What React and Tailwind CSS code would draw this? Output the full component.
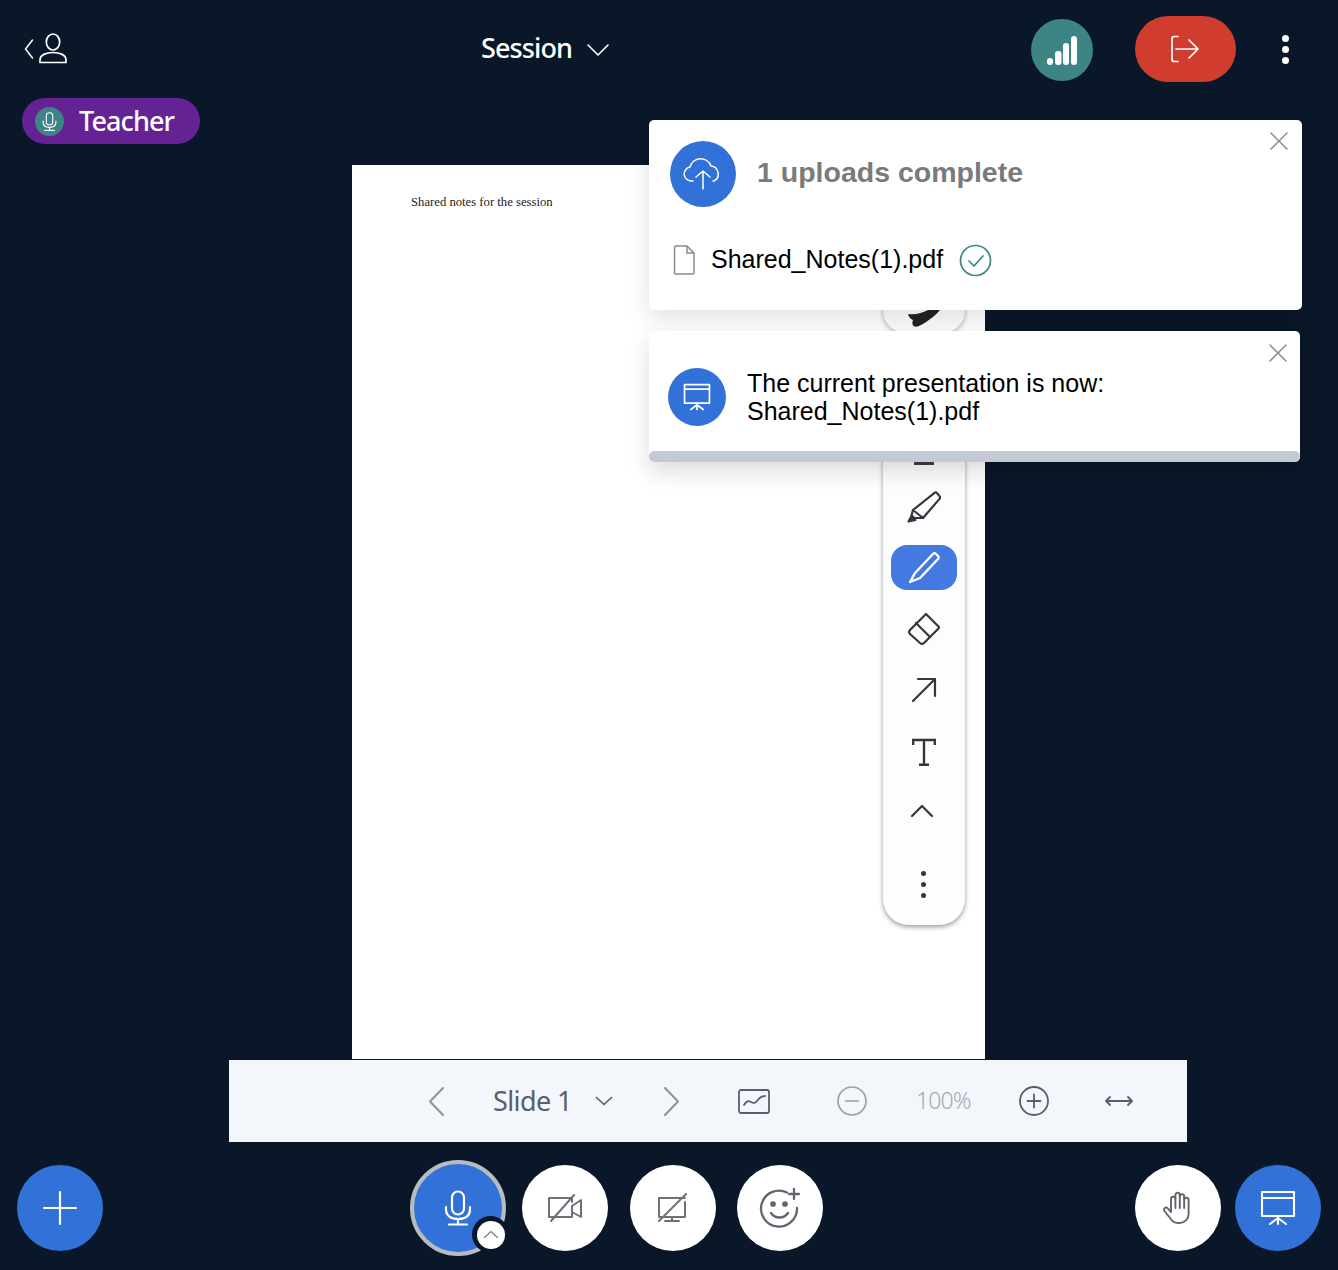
import React from "react";

const S = ({ w, h, vb, c = "currentColor", sw = 2, children, className = "" }) => (
  <svg width={w} height={h} viewBox={vb || `0 0 ${w} ${h}`} fill="none" stroke={c} strokeWidth={sw} strokeLinecap="round" strokeLinejoin="round" className={"block shrink-0 " + className}>
    {children}
  </svg>
);

const Present = ({ w, h, c = "#fff", sw = 2.4 }) => (
  <S w={w} h={h} vb="0 0 36 36" c={c} sw={sw}>
    <rect x="2" y="2" width="32" height="24" />
    <path d="M2 8h32M18 26v3M18 28l-8 6M18 28l8 6M18 28v6" />
  </S>
);

const X = ({ className = "" }) => (
  <S w={20} h={20} c="#8a8f96" sw={1.6} className={className}>
    <path d="M2 2l16 16M18 2L2 18" />
  </S>
);

const Mic = ({ w, h, c, sw = 2 }) => (
  <S w={w} h={h} vb="0 0 28 36" c={c} sw={sw}>
    <rect x="8" y="1.5" width="12" height="23" rx="6" />
    <path d="M2 17v2c0 7 5 10 12 10s12-3 12-10v-2M14 29v5M5 34.5h18" />
  </S>
);

const RoundBtn = ({ className = "", children }) => (
  <div className={"w-[86px] h-[86px] rounded-full shrink-0 flex items-center justify-center " + className}>{children}</div>
);

const Tool = ({ active, children, className = "" }) => (
  <div className={"h-[61px] flex items-center justify-center " + className}>
    {active ? <div className="w-[66px] h-[45px] rounded-[16px] bg-[#4479e2] flex items-center justify-center">{children}</div> : children}
  </div>
);

export default function App() {
  return (
    <div className="relative w-[1338px] h-[1270px] overflow-hidden bg-[#0a1729] flex flex-col font-['Noto_Sans',sans-serif]">
      {/* header */}
      <div className="h-[98px] shrink-0 flex items-center pl-[24px] text-white">
        <S w={10} h={22} c="#fff" sw={1.5}><path d="M8.5 2L1.5 11l7 9" /></S>
        <S w={28} h={31} c="#fff" sw={1.7} className="ml-[5px] -mt-[1px]">
          <ellipse cx="14" cy="9" rx="6.7" ry="8" />
          <path d="M1 29.5v-2.5c0-5 6-7.500 13-7.500s13 2.500 13 7.500v2.500z" />
        </S>
        <div className="ml-[414px] w-[91px] -mt-[3px] text-[27px] leading-none font-medium whitespace-nowrap tracking-[-0.9px]">Session</div>
        <S w={24} h={14} c="#fff" sw={1.6} className="ml-[14px] mt-[1px]"><path d="M2 2l10 10L22 2" /></S>
        <div className="ml-[421px] mt-[2px] w-[62px] h-[62px] rounded-full bg-[#3d8584] flex items-center justify-center">
          <svg width="30" height="29" viewBox="0 0 30 29" className="block">
            <g fill="#fff">
              <rect x="0" y="22" width="6" height="7" rx="3" />
              <rect x="8" y="15" width="6.500" height="14" rx="3" />
              <rect x="16" y="7" width="6" height="22" rx="3" />
              <rect x="24" y="0" width="6" height="29" rx="3" />
            </g>
          </svg>
        </div>
        <div className="ml-[42px] w-[101px] h-[66px] rounded-full bg-[#d03c2e] flex items-center justify-center">
          <S w={30} h={28} c="#fff" sw={1.7} className="-ml-[2px]">
            <path d="M8 1.500H4a2 2 0 0 0-2 2v21a2 2 0 0 0 2 2h4M6 14h22M19 5l9 9-9 9" />
          </S>
        </div>
        <div className="ml-[46px] flex flex-col gap-[4px]">
          <div className="w-[7px] h-[7px] rounded-full bg-white" />
          <div className="w-[7px] h-[7px] rounded-full bg-white" />
          <div className="w-[7px] h-[7px] rounded-full bg-white" />
        </div>
      </div>

      {/* teacher pill */}
      <div className="ml-[22px] w-[178px] h-[46px] shrink-0 rounded-full bg-[#652295] flex items-center pl-[13px] text-white">
        <div className="w-[29px] h-[29px] rounded-full bg-[#3d8584] flex items-center justify-center">
          <Mic w={15} h={21} c="#fff" sw={2} />
        </div>
        <span className="ml-[15px] -mt-[1px] text-[27px] leading-none font-medium whitespace-nowrap tracking-[-0.9px]">Teacher</span>
      </div>

      {/* slide */}
      <div className="relative mt-[21px] ml-[352px] w-[633px] h-[894px] shrink-0 bg-white">
        <div className="pl-[59px] pt-[29px] text-[12.700px] leading-[16px] text-[#222] font-['Liberation_Serif',serif] whitespace-nowrap">Shared notes for the session</div>

        {/* tool stub hidden behind notices */}
        <div className="absolute left-[531px] top-[115px] w-[82px] h-[53px] bg-[#fdfdfd] rounded-b-[22px] shadow-[0_1px_4px_rgba(0,0,0,0.35)] flex justify-center">
          <svg width="34" height="20" viewBox="0 0 34 20" className="block mt-[30px]">
            <path d="M1 4c8 1 14-1 20-4l12 0c-5 6-13 12-21 16-5 2-8-1-6-6-3-1-4-3-5-6z" fill="#222" />
          </svg>
        </div>

        {/* toolbar */}
        <div className="absolute left-[531px] top-[275px] w-[82px] h-[485px] bg-[#fdfdfd] rounded-b-[26px] shadow-[0_2px_5px_rgba(0,0,0,0.4)]">
          <div className="mt-[22px] mx-auto w-[20px] h-[3px] bg-[#3b3f45]" />
          <div className="mt-[11px]">
            <Tool>
              <S w={34} h={32} c="#33373d" sw={2.2} className="-ml-[1px]">
                <path d="M27.500 1.800a1.800 1.800 0 0 1 2.400.200l2.800 3.400a1.800 1.800 0 0 1-.200 2.500L16 27l-10-8z" />
                <path d="M6 19l-1.500 5.500 3 2.500L16 27" />
                <path d="M4.500 25L1.500 30.500l7-1.500z" fill="#33373d" />
              </S>
            </Tool>
            <Tool active>
              <S w={34} h={34} c="#fff" sw={2.4} className="-ml-[1px]">
                <path d="M8 22L26 3a2 2 0 0 1 3 0l2 2a2 2 0 0 1 0 3L13 27 3 31z" />
              </S>
            </Tool>
            <Tool>
              <S w={34} h={34} c="#33373d" sw={2.2} className="-ml-[1px]">
                <path d="M19 2l12.500 12.500a1.500 1.500 0 0 1 0 2L17 31a3 3 0 0 1-4 0L3 22a3 3 0 0 1 0-4z" />
                <path d="M9 11l14 14" />
              </S>
            </Tool>
            <Tool>
              <S w={26} h={26} c="#33373d" sw={2.2}>
                <path d="M2 24L24 2M7 2h17v17" />
              </S>
            </Tool>
            <Tool className="mt-[1px] pr-[1px]">
              <svg width="24" height="28" viewBox="0 0 24 28" fill="none" stroke="#33373d" strokeWidth="2.400" className="block">
                <path d="M1.200 7V2h21.600v5M12 2v25M7 26.800h10" />
              </svg>
            </Tool>
            <Tool className="-mt-[2px] pr-[4px]">
              <S w={24} h={14} c="#33373d" sw={2.2}><path d="M2 12L12 2l10 10" /></S>
            </Tool>
            <Tool className="mt-[13px] pr-[1px]">
              <div className="flex flex-col gap-[6px]">
                <div className="w-[5px] h-[5px] rounded-full bg-[#33373d]" />
                <div className="w-[5px] h-[5px] rounded-full bg-[#33373d]" />
                <div className="w-[5px] h-[5px] rounded-full bg-[#33373d]" />
              </div>
            </Tool>
          </div>
        </div>
      </div>

      {/* slide controls */}
      <div className="mt-[1px] ml-[229px] w-[958px] h-[82px] shrink-0 bg-[#f3f6fa] flex items-center pl-[199px] text-[#56606c]">
        <S w={17} h={31} c="#8b939c" sw={2}><path d="M15 2L2 15.500 15 29" /></S>
        <span className="ml-[48px] w-[80px] -mt-[1px] text-[27px] leading-none whitespace-nowrap tracking-[-0.6px]">Slide 1</span>
        <S w={18} h={10} c="#56606c" sw={1.7} className="ml-[22px]"><path d="M1.500 1.500L9 8.500l7.500-7" /></S>
        <S w={17} h={31} c="#8b939c" sw={2} className="ml-[50px]"><path d="M2 2l13 13.500L2 29" /></S>
        <S w={32} h={25} c="#56606c" sw={1.8} className="ml-[58px]">
          <rect x="1" y="1" width="30" height="23" rx="2" />
          <path d="M6 16c3-5 5-4 7-3s4 2 6-1 4-5 8-5" />
        </S>
        <S w={30} h={30} c="#9aa1a9" sw={1.7} className="ml-[67px]">
          <circle cx="15" cy="15" r="14" />
          <path d="M8.500 15h13" />
        </S>
        <span className="ml-[49px] w-[54px] -mt-[1px] text-[23px] leading-none font-light text-[#a4abb3] whitespace-nowrap tracking-[-0.9px]">100%</span>
        <S w={30} h={30} c="#56606c" sw={1.8} className="ml-[49px]">
          <circle cx="15" cy="15" r="14" />
          <path d="M8.500 15h13M15 8.500v13" />
        </S>
        <S w={30} h={12} c="#56606c" sw={1.8} className="ml-[55px]">
          <path d="M2 6h26M6 2L2 6l4 4M24 2l4 4-4 4" />
        </S>
      </div>

      {/* bottom actions */}
      <div className="mt-[23px] h-[86px] shrink-0 flex items-center pl-[17px]">
        <RoundBtn className="bg-[#3271d8]">
          <S w={36} h={36} c="#fff" sw={2.2}><path d="M18 2v32M2 18h32" /></S>
        </RoundBtn>
        <div className="relative ml-[307px] w-[96px] h-[96px] shrink-0 rounded-full bg-[#3271d8] border-[4px] border-[#b8bcc1] flex items-center justify-center">
          <Mic w={28} h={36} c="#fff" sw={2.2} />
          <div className="absolute left-[58px] top-[52px] w-[37px] h-[37px] rounded-full bg-[#0a1729] flex items-center justify-center">
            <div className="w-[28px] h-[28px] rounded-full bg-white flex items-center justify-center">
              <S w={16} h={9} c="#7b8289" sw={1.3}><path d="M1.500 7.500L8 1.500l6.500 6" /></S>
            </div>
          </div>
        </div>
        <RoundBtn className="bg-white ml-[16px]">
          <S w={36} h={30} c="#6b7178" sw={2}>
            <path d="M25 9V5H2v19h23v-5M25 13l9-6v17l-9-5z" />
            <path d="M4 28L27 2" />
          </S>
        </RoundBtn>
        <RoundBtn className="bg-white ml-[22px]">
          <S w={32} h={30} c="#6b7178" sw={2}>
            <path d="M28 5H2v19h26V9M15 24v4M8 28h14" />
            <path d="M2 28L29 1" />
          </S>
        </RoundBtn>
        <RoundBtn className="bg-white ml-[21px]">
          <S w={42} h={42} c="#5f666e" sw={2.300}>
            <path d="M28 5.500A18 18 0 1 0 38 21" />
            <path d="M12 26c4 6 13 6 17 0" />
            <path d="M35 2v10M30 7h10" />
            <circle cx="14" cy="17" r="1.700" fill="#5f666e" />
            <circle cx="26" cy="17" r="1.700" fill="#5f666e" />
          </S>
        </RoundBtn>
        <RoundBtn className="bg-white ml-[312px]">
          <S w={30} h={36} c="#5f666e" sw={1.900} className="-ml-[1px]">
            <path d="M8 22V9a2.200 2.200 0 0 1 4.400 0V5a2.200 2.200 0 0 1 4.400 0v1.500a2.200 2.200 0 0 1 4.400 0V10a2.200 2.200 0 0 1 4.400 0v14a9 9 0 0 1-9 9h-2a8 8 0 0 1-6-3l-2-2.500L1.500 21a2 2 0 0 1 3-2.800z" />
            <path d="M12.400 9v9M16.800 5v13M21.200 6.500V18" />
          </S>
        </RoundBtn>
        <RoundBtn className="bg-[#3271d8] ml-[14px]">
          <Present w={36} h={36} sw={2.1} />
        </RoundBtn>
      </div>

      {/* notices */}
      <div className="absolute left-[649px] top-[120px] w-[653px] h-[190px] bg-white rounded-[5px] shadow-[0_8px_24px_rgba(0,0,0,0.12)] pt-[21px] pl-[21px]">
        <X className="absolute right-[13px] top-[11px]" />
        <div className="flex items-center h-[66px]">
          <div className="w-[66px] h-[66px] rounded-full bg-[#3271d8] flex items-center justify-center">
            <S w={40} h={32} c="#fff" sw={1.500}>
              <path d="M10 23H8a7 7 0 0 1-1-13.900A11 11 0 0 1 28 8a8 8 0 0 1 3 15h-1" />
              <path d="M20 31V13M13 19l7-6 7 6" />
            </S>
          </div>
          <div className="ml-[21px] -mt-[4px] text-[28.500px] leading-none font-bold text-[#7a7a7a] font-['Liberation_Sans',sans-serif] whitespace-nowrap">1 uploads complete</div>
        </div>
        <div className="flex items-center mt-[37px] ml-[3px] h-[32px]">
          <S w={22} h={30} c="#8b8b8b" sw={1.500}>
            <path d="M1.500 2.500a1.500 1.500 0 0 1 1.500-1.500h11l7 7v20a1 1 0 0 1-1 1H2.500a1 1 0 0 1-1-1zM14 1v7h7" />
          </S>
          <span className="ml-[16px] -mt-[1px] text-[25px] leading-none text-black font-['Liberation_Sans',sans-serif] whitespace-nowrap">Shared_Notes(1).pdf</span>
          <S w={33} h={33} c="#3d8584" sw={1.700} className="ml-[16px]">
            <circle cx="16.500" cy="16.500" r="15" />
            <path d="M10 17l5 5 9-10" />
          </S>
        </div>
      </div>

      <div className="absolute left-[649px] top-[331px] w-[651px] h-[131px] bg-white rounded-[5px] shadow-[0_10px_22px_rgba(0,0,0,0.14)] overflow-hidden flex flex-col">
        <X className="absolute right-[12px] top-[12px]" />
        <div className="flex items-center flex-1 pl-[19px] pt-[11px]">
          <div className="w-[58px] h-[58px] rounded-full bg-[#3271d8] flex items-center justify-center">
            <Present w={28} h={28} sw={2.2} />
          </div>
          <div className="ml-[21px] text-[25px] leading-[28px] text-black font-['Liberation_Sans',sans-serif] whitespace-nowrap">
            <div>The current presentation is now:</div>
            <div>Shared_Notes(1).pdf</div>
          </div>
        </div>
        <div className="h-[11px] bg-[#c2cbd3] rounded-[5px]" />
      </div>
    </div>
  );
}
